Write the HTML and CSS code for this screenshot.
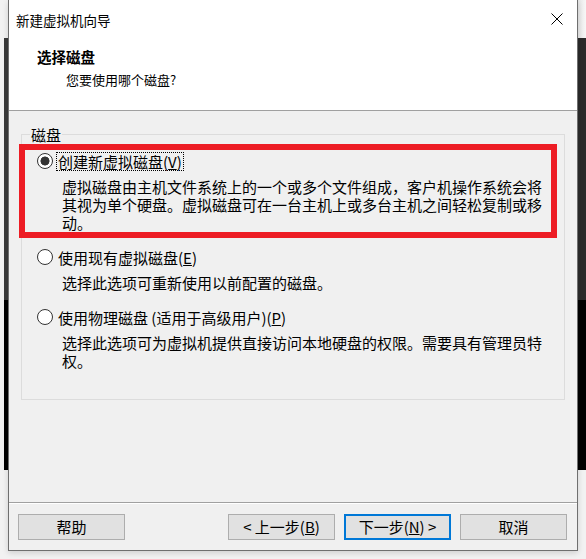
FILE: index.html
```html
<!DOCTYPE html>
<html lang="zh-CN">
<head>
    <meta charset="UTF-8">
    <meta name="viewport" content="width=device-width, initial-scale=1.0">
    <title>新建虚拟机向导</title>
    <link rel="stylesheet" href="styles.css">
</head>
<body>

<div class="window">
    <div class="titlebar">
        <span class="title">新建虚拟机向导</span>
        <svg class="close" width="12" height="12" viewBox="0 0 12 12">
            <path d="M0.5 0.5 L11.5 11.5 M11.5 0.5 L0.5 11.5" stroke="#000" stroke-width="1" fill="none"/>
        </svg>
    </div>

    <div class="header">
        <div class="headerTitle">选择磁盘</div>
        <div class="headerSub">您要使用哪个磁盘?</div>
    </div>

    <div class="content">
        <div class="group">
            <span class="groupLabel">磁盘</span>

            <div class="option">
                <label class="optionRow">
                    <input type="radio" name="disk" class="radio" checked>
                    <span class="optionText focus">创建新虚拟磁盘(<u>V</u>)</span>
                </label>
                <p class="optionDesc">虚拟磁盘由主机文件系统上的一个或多个文件组成，客户机操作系统会将其视为单个硬盘。虚拟磁盘可在一台主机上或多台主机之间轻松复制或移动。</p>
            </div>

            <div class="option">
                <label class="optionRow">
                    <input type="radio" name="disk" class="radio">
                    <span class="optionText">使用现有虚拟磁盘(<u>E</u>)</span>
                </label>
                <p class="optionDesc">选择此选项可重新使用以前配置的磁盘。</p>
            </div>

            <div class="option">
                <label class="optionRow">
                    <input type="radio" name="disk" class="radio">
                    <span class="optionText">使用物理磁盘 (适用于高级用户)(<u>P</u>)</span>
                </label>
                <p class="optionDesc">选择此选项可为虚拟机提供直接访问本地硬盘的权限。需要具有管理员特权。</p>
            </div>
        </div>
    </div>

    <div class="footer">
        <button class="btn btnHelp">帮助</button>
        <button class="btn">&lt; 上一步(<u>B</u>)</button>
        <button class="btn btnDefault">下一步(<u>N</u>) &gt;</button>
        <button class="btn">取消</button>
    </div>

    <div class="highlight"></div>
</div>

</body>
</html>
```

FILE: styles.css
```css
html, body {
    margin: 0;
    width: 586px;
    height: 559px;
    overflow: hidden;
}
body {
    font-family: "Noto Sans CJK SC", "Liberation Sans", sans-serif;
    color: #000;
    background:
        linear-gradient(#3a3a3a, #3a3a3a) 4px 38px / 4px 262px no-repeat,
        linear-gradient(#000, #000) 4px 300px / 4px 170px no-repeat,
        linear-gradient(#2b2b2b, #2b2b2b) 578px 38px / 8px 262px no-repeat,
        linear-gradient(#000, #000) 578px 300px / 8px 170px no-repeat,
        linear-gradient(to right, #e6e6e6, #f7f7f7) 578px 0 / 8px 38px no-repeat,
        #f2f2f2;
}
.window {
    position: relative;
    box-sizing: border-box;
    margin-left: 8px;
    width: 570px;
    height: 551px;
    border: 1px solid #6f6f6f;
    border-top: none;
    background: #f0f0f0;
    display: flex;
    flex-direction: column;
    box-shadow: 0 2px 6px rgba(0, 0, 0, 0.15);
}
.titlebar {
    height: 38px;
    flex: none;
    display: flex;
    align-items: center;
    justify-content: space-between;
    padding: 1px 14px 0 7px;
    box-sizing: border-box;
    background: #fff;
}
.title {
    font-size: 13.5px;
    line-height: 18px;
}
.close {
    display: block;
    margin-top: -2px;
}
.header {
    height: 72px;
    flex: none;
    box-sizing: border-box;
    padding: 9px 0 0 28px;
    background: #fff;
    border-bottom: 1px solid #a0a0a0;
    height: 73px;
}
.headerTitle {
    font-size: 14.5px;
    font-weight: bold;
    line-height: 20px;
}
.headerSub {
    font-size: 13px;
    line-height: 18px;
    margin: 4px 0 0 29px;
}
.content {
    flex: 1;
    padding: 23px 12px 0 12px;
}
.group {
    position: relative;
    box-sizing: border-box;
    height: 266px;
    border: 1px solid #dcdcdc;
    padding: 17px 0 0 15px;
}
.groupLabel {
    position: absolute;
    left: 8px;
    top: -9px;
    padding: 0 1px;
    font-size: 15px;
    line-height: 18px;
    background: #f0f0f0;
}
.option + .option {
    margin-top: 16px;
}
.optionRow {
    display: flex;
    align-items: center;
    height: 18px;
}
.radio {
    appearance: none;
    -webkit-appearance: none;
    box-sizing: border-box;
    width: 16px;
    height: 16px;
    margin: 0 3px 0 0;
    border: 1px solid #333;
    border-radius: 50%;
    background: #fff;
}
.radio:checked {
    background: radial-gradient(circle, #333 0 4.2px, #fff 4.8px);
}
.optionText {
    font-size: 15px;
    line-height: 17px;
    padding: 0 1px;
    border: 1px solid transparent;
}
.optionText.focus {
    border: 1px dotted #000;
}
.optionDesc {
    margin: 8px 0 0 25px;
    width: 482px;
    font-size: 15px;
    line-height: 18px;
}
.footer {
    flex: none;
    height: 48px;
    box-sizing: border-box;
    border-top: 1px solid #a0a0a0;
    box-shadow: inset 0 1px 0 #fff;
    padding: 11px 10px 0 9px;
    display: flex;
    gap: 9px;
}
.btn {
    width: 107px;
    height: 26px;
    box-sizing: border-box;
    padding: 0;
    font-family: inherit;
    font-size: 15px;
    line-height: 18px;
    color: #000;
    background: #e1e1e1;
    border: 1px solid #adadad;
}
.btnHelp {
    margin-right: auto;
}
.btnDefault {
    border: 2px solid #0078d7;
}
.highlight {
    position: absolute;
    left: 10px;
    top: 144px;
    width: 538px;
    height: 94px;
    box-sizing: border-box;
    border: 6px solid #ed1c24;
    pointer-events: none;
}
```
